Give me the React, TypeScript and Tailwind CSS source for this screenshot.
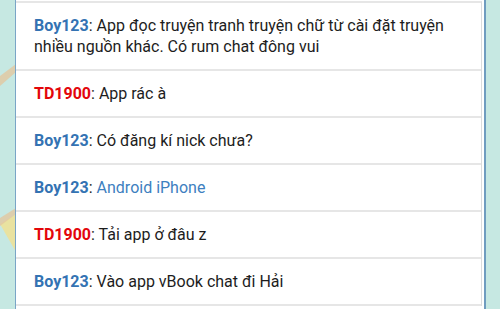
import React from "react";

type Msg = {
  user: string;
  color: string;
  text: string;
  link?: boolean;
};

const messages: Msg[] = [
  {
    user: "Boy123",
    color: "text-[#3473b3]",
    text: "App đọc truyện tranh truyện chữ từ cài đặt truyện nhiều nguồn khác. Có rum chat đông vui",
  },
  { user: "TD1900", color: "text-[#e3060b]", text: "App rác à" },
  { user: "Boy123", color: "text-[#3473b3]", text: "Có đăng kí nick chưa?" },
  { user: "Boy123", color: "text-[#3473b3]", text: "Android iPhone", link: true },
  { user: "TD1900", color: "text-[#e3060b]", text: "Tải app ở đâu z" },
  { user: "Boy123", color: "text-[#3473b3]", text: "Vào app vBook chat đi Hải" },
];

export default function App() {
  return (
    <div
      className="relative w-[500px] h-[309px] overflow-hidden bg-[#c6e8e2]"
      style={{ fontFamily: "Roboto, 'Noto Sans', sans-serif" }}
    >
      {/* map bits peeking out on the left */}
      <svg className="absolute left-0 top-0" width="20" height="309" viewBox="0 0 20 309">
        <path d="M0 76 L16 64 L16 72 L0 86 Z" fill="#e2c7a0" opacity="0.8" />
        <path d="M0 224 L16 214 L16 252 Z" fill="#e9e2a0" />
        <path d="M0 218 L16 208 L16 214 L0 226 Z" fill="#e2c7a0" opacity="0.8" />
      </svg>

      <div className="relative ml-[15px] w-[471px] h-full bg-white border-l border-[#7aa5c6] border-r-2 border-r-[#6f9cbf]">
        <div className="pt-[1px] pr-[2px]">
          <ul className="border-t-2 border-[#e6e6e6] border-r border-r-[#dcdcdc]">
            {messages.map((m, i) => (
              <li
                key={i}
                className="border-b-2 border-[#e6e6e6] pl-[18px] pr-4 py-3 text-[16px] leading-[21px] text-[#1d1d1d]"
              >
                <span className={`font-bold ${m.color}`}>{m.user}</span>
                <span>:</span>{" "}
                <span className={m.link ? "text-[#3d80c0]" : ""}>{m.text}</span>
              </li>
            ))}
          </ul>
        </div>
      </div>
    </div>
  );
}
